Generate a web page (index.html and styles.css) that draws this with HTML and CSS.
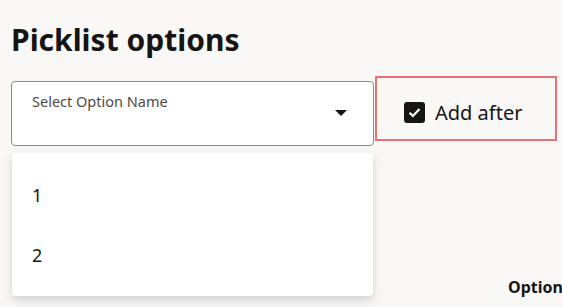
FILE: index.html
```html
<!DOCTYPE html>
<html>
<head>
  <title>Picklist options</title>
  <link rel="stylesheet" href="styles.css">
</head>
<body>
  <h1 class="page-title">Picklist options</h1>
  <div class="row">
    <div class="select-wrap">
      <div class="select-box">
        <span class="select-label">Select Option Name</span>
        <svg class="select-arrow" width="12" height="6" viewBox="0 0 12 6"><path d="M0 0H12L6 6Z" fill="#161513"/></svg>
      </div>
      <ul class="dropdown">
        <li>1</li>
        <li>2</li>
      </ul>
    </div>
    <label class="add-after">
      <span class="check-box">
        <svg width="13" height="11" viewBox="0 0 13 11"><path d="M1.5 5.8L4.9 9L11.5 2" fill="none" stroke="#fff" stroke-width="2.2"/></svg>
      </span>
      Add after
    </label>
  </div>
  <div class="col-head">Options</div>
</body>
</html>
```

FILE: styles.css
```css
body {
  margin: 0;
  padding: 0 0 0 11px;
  background-color: #faf8f7;
  font-family: "Noto Sans", sans-serif;
  color: #161513;
  overflow: hidden;
  height: 307px;
}

.page-title {
  margin: 0;
  padding-top: 19px;
  font-size: 30px;
  font-weight: bold;
  line-height: 42px;
}

.row {
  display: flex;
  align-items: flex-start;
  margin-top: 15px;
}

.select-wrap {
  position: relative;
  flex-shrink: 0;
  width: 363px;
  margin-top: 5px;
}

.select-box {
  box-sizing: border-box;
  height: 65px;
  background-color: #fff;
  border: 1px solid #8f8a86;
  border-radius: 4px;
  position: relative;
}

.select-label {
  position: absolute;
  left: 20px;
  top: 9px;
  font-size: 14.5px;
  color: #4f4a45;
}

.select-arrow {
  position: absolute;
  left: 323px;
  top: 28px;
}

.dropdown {
  position: absolute;
  left: 1px;
  top: 72px;
  width: 361px;
  box-sizing: border-box;
  margin: 0;
  padding: 12px 0 11px;
  list-style: none;
  background-color: #fff;
  border-radius: 4px;
  box-shadow: 0 4px 10px rgba(0, 0, 0, 0.16);
  z-index: 2;
}

.dropdown li {
  height: 60px;
  line-height: 60px;
  padding-left: 20px;
  font-size: 18px;
}

.add-after {
  box-sizing: border-box;
  flex-shrink: 0;
  width: 182px;
  height: 65px;
  margin-left: 1px;
  border: 2px solid #e87272;
  display: flex;
  align-items: center;
  padding: 8px 0 0 27px;
  font-size: 20px;
  gap: 10px;
}

.check-box {
  width: 21px;
  height: 21px;
  background-color: #161513;
  border-radius: 3px;
  display: flex;
  align-items: center;
  justify-content: center;
}

.col-head {
  margin: 0;
  padding-left: 497px;
  margin-top: 130px;
  font-weight: bold;
  font-size: 16px;
  white-space: nowrap;
}
```
